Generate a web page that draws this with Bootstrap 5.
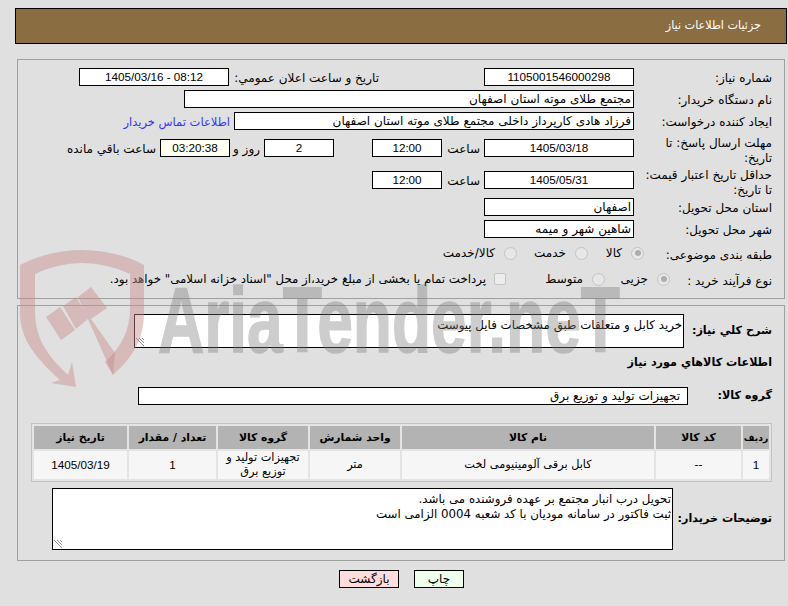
<!DOCTYPE html>
<html lang="fa" dir="rtl">
<head>
<meta charset="utf-8">
<title>جزئیات اطلاعات نیاز</title>
<link href="https://cdn.jsdelivr.net/npm/bootstrap@5.3.0/dist/css/bootstrap.min.css" rel="stylesheet">
<style>
html,body{height:100%}
body{background:#e0e0e0;color:#000;font-family:"DejaVu Sans","Liberation Sans",sans-serif;font-size:12px;line-height:14px;overflow:hidden;position:relative}
.pg-head{margin:8px 1px 0 15px;height:36px;background:#8b6d42;border:1px solid #000;color:#fff;font-size:11.2px;padding-right:25px}
.fs{border:1px solid #a0a0a0;margin:0 3px 0 17px}
.fs-a{margin-top:15px;height:240px;padding:8px 12px 0 0}
.fs-b{margin-top:6px;height:256px;padding:8px 12px 0 0}
.frow{height:18px;margin-bottom:4px}
.m6{margin-bottom:6px}.m9{margin-bottom:9px}.m14{margin-bottom:14px}
.lab{width:138px;flex:none;white-space:nowrap;padding-top:3px}
.lab-date{width:150px;margin-right:105px}
.two{line-height:14.5px;padding-top:0;margin-top:-3px}
.box{background:#fff;border:1px solid #000;height:18px;line-height:16px;padding:0 2px;white-space:nowrap;overflow:hidden;flex:none}
.num{font-family:"Liberation Sans",sans-serif;font-size:11.7px;text-align:center}
.w150{width:150px}.w70{width:70px}.w400{width:400px}.w450{width:450px}
.tick{background:#fffff2}
.link{color:#3333ff;text-decoration:none;margin-right:4px;padding-top:3px;font-size:11.5px}
.saat{width:42px;padding:3px 4px 0 0;flex:none}
.gap38{width:38px;flex:none}
.roz{width:34px;padding:3px 4px 0 0;flex:none}
.baqi{padding:3px 4px 0 0}
.dot,.sq{display:inline-block;flex:none;width:13px;height:13px;border:1px solid #c4c4c4;background:#e7e7e7}
.dot{border-radius:50%;position:relative}
.dot.on::after{content:"";position:absolute;inset:2.5px;border-radius:50%;background:#adadad}
.sq{border-radius:2px;background:#ececec;width:12px;height:12px}
.opt{flex:none;white-space:nowrap;padding-right:9px}
.opt-long{font-size:11.8px;padding-right:8px}
.o-a{margin-right:-10px}.o-b{margin-right:-36px}
.w43a{width:43px}.w58{width:58px}.w52{width:52px}.w86{width:86px}
.rowr{height:18px;margin-bottom:8px}
.bold{font-weight:700;font-size:11.2px;white-space:nowrap;flex:none}
.ta{background:#fff;border:1px solid #000;padding:3px 1px;position:relative;line-height:14.5px;font-size:11.8px;flex:none}
.ta-a{width:550px;height:34px}
.ta-b{width:621px;height:62px}
.grip{position:absolute;left:1px;bottom:1px}
.lbl-a{width:88px}.lbl-g{width:84px}.lbl-t{width:99px}
.sect{margin-top:8px;height:31px}
.box-g{width:550px;padding-right:7px}
.grid-t{border-collapse:separate;border-spacing:2px;border:1px solid #c3c3c3;background:#e4e4e4;width:741px;table-layout:fixed;margin:18px 0 0;font-size:11.3px;line-height:14px;text-align:center}
.grid-t th{background:#b3b3b3;height:23px;padding:0;font-weight:700;font-size:10.8px}
.grid-t th.th-s{font-size:9.2px}
.grid-t td{background:#f6f6f6;height:28px;padding:0}
.c1{width:26px}.c2{width:85px}.c3{width:252px}.c4{width:90px}.c5{width:90px}.c6{width:87px}.c7{width:93px}
.tl{margin-top:6px}
.acts{margin-top:9px;padding-left:15px;gap:15px}
.act{width:50px;height:18px;border:1px solid #000;color:#000;line-height:16px;text-align:center;font-size:12px;padding:0}
.act-g{background:#eeffee}.act-r{background:#ffdddd;width:60px}
.mark-w{position:absolute;left:0;top:0;pointer-events:none}
.mark-t{direction:ltr;font-family:"Liberation Sans",sans-serif;font-weight:700;font-size:93px;fill:#777;stroke:#777;stroke-width:1.5px;opacity:.36}
</style>
</head>
<body>
<div class="pg-head d-flex align-items-center"><span>جزئیات اطلاعات نیاز</span></div>

<div class="fs fs-a">
  <div class="d-flex frow">
    <div class="lab">شماره نیاز:</div>
    <div class="box num w150">1105001546000298</div>
    <div class="lab lab-date">تاریخ و ساعت اعلان عمومي:</div>
    <div class="box num w150" dir="ltr">1405/03/16 - 08:12</div>
  </div>
  <div class="d-flex frow">
    <div class="lab">نام دستگاه خریدار:</div>
    <div class="box w450">مجتمع طلای موته استان اصفهان</div>
  </div>
  <div class="d-flex frow m9">
    <div class="lab">ایجاد کننده درخواست:</div>
    <div class="box w400">فرزاد هادی کارپرداز داخلی مجتمع طلای موته استان اصفهان</div>
    <a class="link" href="#">اطلاعات تماس خریدار</a>
  </div>
  <div class="d-flex frow m14">
    <div class="lab two">مهلت ارسال پاسخ: تا<br>تاریخ:</div>
    <div class="box num w150">1405/03/18</div>
    <div class="saat">ساعت</div>
    <div class="box num w70">12:00</div>
    <div class="gap38"></div>
    <div class="box num w70">2</div>
    <div class="roz">روز و</div>
    <div class="box num w70 tick">03:20:38</div>
    <div class="baqi">ساعت باقي مانده</div>
  </div>
  <div class="d-flex frow m9">
    <div class="lab two">حداقل تاریخ اعتبار قیمت:<br>تا تاریخ:</div>
    <div class="box num w150">1405/05/31</div>
    <div class="saat">ساعت</div>
    <div class="box num w70">12:00</div>
  </div>
  <div class="d-flex frow">
    <div class="lab">استان محل تحویل:</div>
    <div class="box w150">اصفهان</div>
  </div>
  <div class="d-flex frow m6">
    <div class="lab">شهر محل تحویل:</div>
    <div class="box w150">شاهین شهر و میمه</div>
  </div>
  <div class="d-flex rowr align-items-center">
    <div class="lab">طبقه بندی موضوعی:</div>
    <span class="dot on o-a"></span><span class="opt w43a">کالا</span>
    <span class="dot"></span><span class="opt w58">خدمت</span>
    <span class="dot"></span><span class="opt">کالا/خدمت</span>
  </div>
  <div class="d-flex rowr align-items-center">
    <div class="lab">نوع فرآیند خرید :</div>
    <span class="dot on o-b"></span><span class="opt w52">جزیی</span>
    <span class="dot"></span><span class="opt w86">متوسط</span>
    <span class="sq"></span><span class="opt opt-long">پرداخت تمام یا بخشی از مبلغ خرید،از محل "اسناد خزانه اسلامی" خواهد بود.</span>
  </div>
</div>

<div class="fs fs-b">
  <div class="d-flex">
    <div class="bold lbl-a align-self-center">شرح كلي نياز:</div>
    <div class="ta ta-a">خرید کابل و متعلقات طبق مشخصات فایل پیوست
      <svg class="grip" width="8" height="8" viewBox="0 0 8 8"><path d="M0 0L8 8M3 0L8 5M6 0L8 2" stroke="#777" stroke-width=".8"/></svg>
    </div>
  </div>
  <div class="bold sect">اطلاعات كالاهاي مورد نياز</div>
  <div class="d-flex align-items-center">
    <div class="bold lbl-g">گروه کالا:</div>
    <div class="box box-g">تجهیزات تولید و توزیع برق</div>
  </div>
  <table class="grid-t">
    <colgroup><col class="c1"><col class="c2"><col class="c3"><col class="c4"><col class="c5"><col class="c6"><col class="c7"></colgroup>
    <tr><th class="th-s">ردیف</th><th>کد کالا</th><th>نام کالا</th><th>واحد شمارش</th><th>گروه کالا</th><th>تعداد / مقدار</th><th>تاریخ نیاز</th></tr>
    <tr><td class="num">1</td><td>--</td><td>کابل برقی آلومینیومی لخت</td><td>متر</td><td>تجهیزات تولید و توزیع برق</td><td class="num">1</td><td class="num">1405/03/19</td></tr>
  </table>
  <div class="d-flex align-items-center tl">
    <div class="bold lbl-t">توضیحات خریدار:</div>
    <div class="ta ta-b">تحویل درب انبار مجتمع بر عهده فروشنده می باشد.<br>ثبت فاکتور در سامانه مودیان با کد شعبه 0004 الزامی است
      <svg class="grip" width="8" height="8" viewBox="0 0 8 8"><path d="M0 0L8 8M3 0L8 5M6 0L8 2" stroke="#777" stroke-width=".8"/></svg>
    </div>
  </div>
</div>

<div class="d-flex justify-content-center acts">
  <button class="act act-g" type="button">چاپ</button>
  <button class="act act-r" type="button">بازگشت</button>
</div>

<svg class="mark-w" width="788" height="606" viewBox="0 0 788 606">
  <path fill-rule="evenodd" fill="#c98a8a" fill-opacity=".45" d="M20 265C42 254 62 250 82 250C104 250 125 255 144 265V312C144 340 132 358 113 375L105 362C122 346 130 330 130 308V274C115 267 98 263 82 263C66 263 50 267 35 274V312C35 340 50 358 68 375L72 362L76 387L51 383L60 380C36 358 20 340 20 312Z"/>
  <path fill="#c98a8a" fill-opacity=".45" d="M46 317L60 307L75 330L61 340ZM63 306L76 297L89 318L76 329ZM78 297L91 287L107 308L91 319L115 353L113 375Z"/>
  <text class="mark-t" x="158" y="352" textLength="462" lengthAdjust="spacingAndGlyphs">AriaTender.neT</text>
</svg>
</body>
</html>
